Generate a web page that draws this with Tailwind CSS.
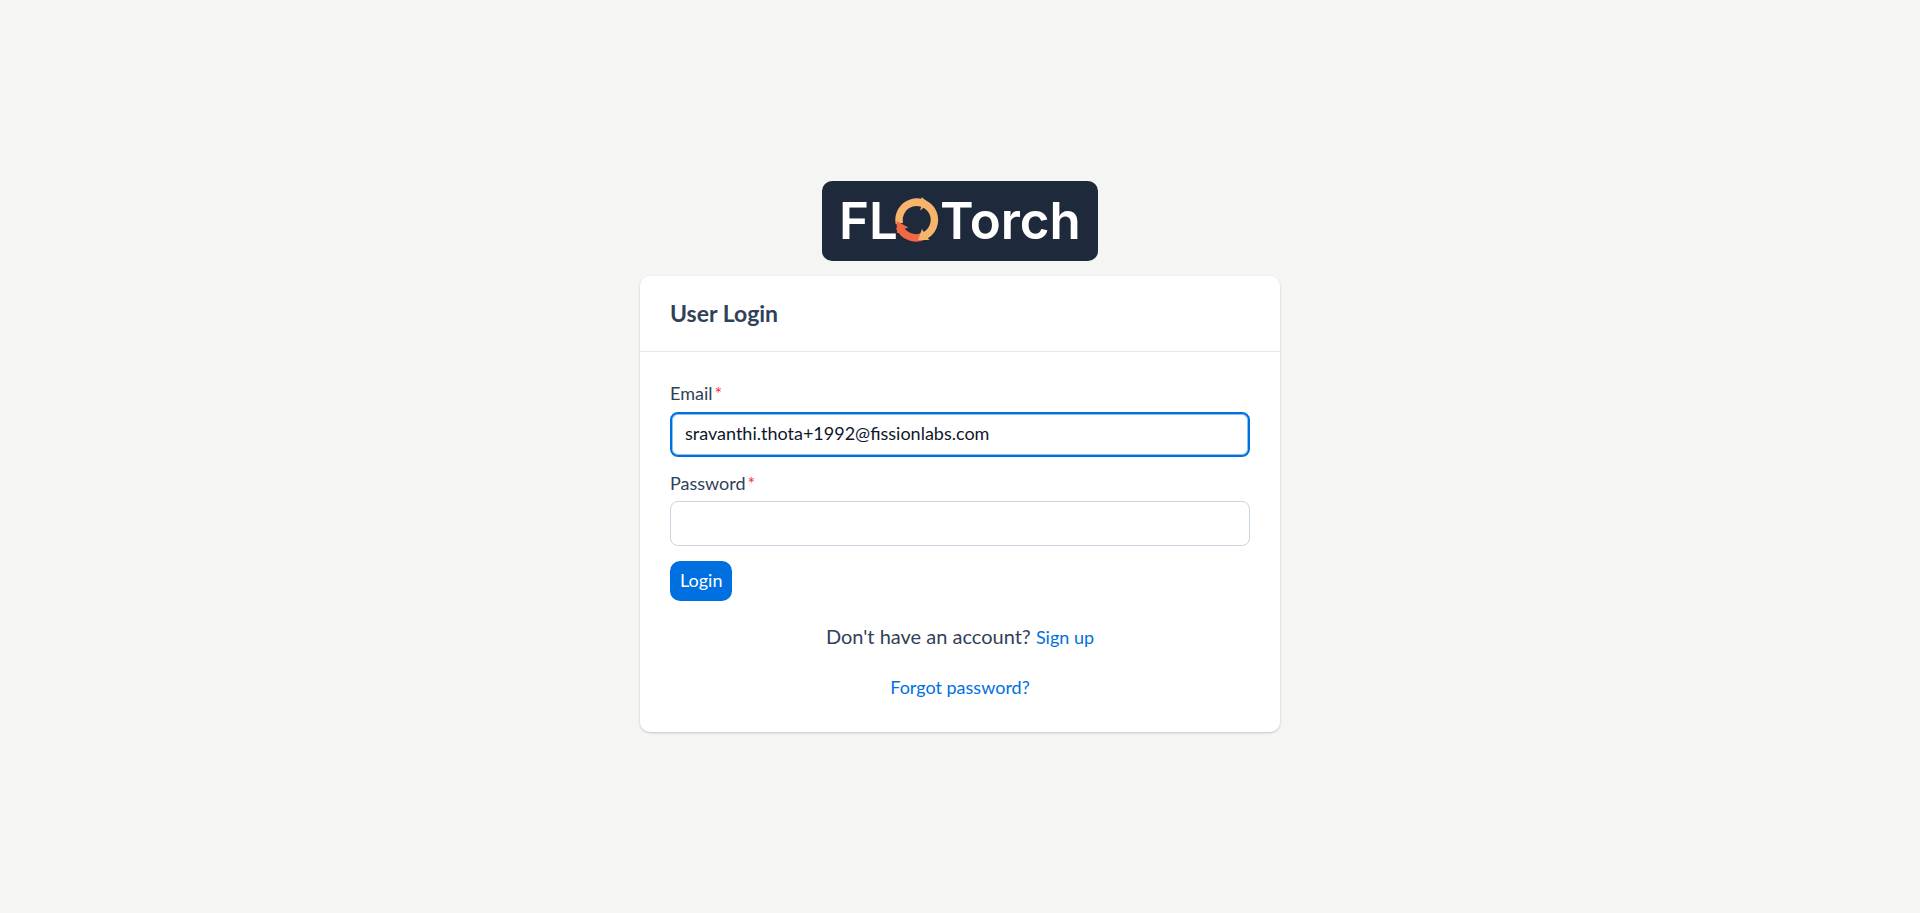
<!DOCTYPE html>
<html lang="en">
<head>
<meta charset="utf-8">
<title>FloTorch - User Login</title>
<script src="https://cdn.jsdelivr.net/npm/@tailwindcss/browser@4"></script>
</head>
<body class="flex min-h-screen flex-col items-center justify-center gap-[15px] bg-[#f5f5f4] font-['Lato',sans-serif] text-[18px] text-slate-700">
  <svg class="h-20 w-[276px] rounded-[10px] bg-[#1e293b]" viewBox="0 0 276 80" role="img" aria-label="FLOTorch">
    <g fill="#fff" font-family="Inter, sans-serif" font-weight="600" font-size="51">
      <text x="17" y="58">FL</text>
      <text x="118" y="58">Torch</text>
    </g>
    <path d="M77.500 46A18 18 0 0 0 101 55.500" fill="none" stroke="#f26744" stroke-width="7.500"/>
    <path d="M77.400 42.500A17.700 17.700 0 1 1 102 55" fill="none" stroke="#f6b56b" stroke-width="7.500"/>
    <path d="M74.500 40L86.500 46.500L81.500 48L83 52L78 52L75 52Z" fill="#f26744"/>
    <path d="M99.500 16L107.500 22.500L98 29.500L99.500 25Z" fill="#f6b56b"/>
    <path d="M100 48L96 59L107.500 59L104 55Z" fill="#f6b56b"/>
  </svg>
  <main class="w-full max-w-[640px] rounded-[10px] bg-white shadow-[0_1px_3px_rgba(0,0,0,0.1),0_1px_2px_rgba(0,0,0,0.1)]">
    <header class="border-b border-slate-200 px-[30px] py-[22px]">
      <h1 class="text-[23px] leading-[31px] font-bold">User Login</h1>
    </header>
    <form class="px-[30px] pt-[29px] pb-[30px]">
      <label for="email" class="block leading-6">Email<span class="ml-[2px] text-[#fb2c36]">*</span></label>
      <input id="email" type="email" value="sravanthi.thota+1992@fissionlabs.com" class="mt-[7px] block h-[45px] w-full rounded-[8px] border-2 border-[#0070e0] px-[13px] pb-[3px] text-slate-900 shadow-[inset_0_0_0_1px_#8fc0f2] outline-none">
      <label for="password" class="mt-[14px] block leading-6">Password<span class="ml-[2px] text-[#fb2c36]">*</span></label>
      <input id="password" type="password" class="mt-[6px] block h-[45px] w-full rounded-[8px] border border-slate-300 px-[14px] pb-[3px] outline-none">
      <button type="button" class="mt-[15px] block h-10 rounded-[10px] bg-[#0070e0] px-[10px] pb-px text-white">Login</button>
      <p class="mt-[20px] text-center text-[20px] leading-[30px]">Don't have an account? <a href="#" class="text-[18px] text-[#0070e0]">Sign up</a></p>
      <p class="mt-[20px] text-center leading-[30px]"><a href="#" class="text-[#0070e0]">Forgot password?</a></p>
    </form>
  </main>
</body>
</html>
